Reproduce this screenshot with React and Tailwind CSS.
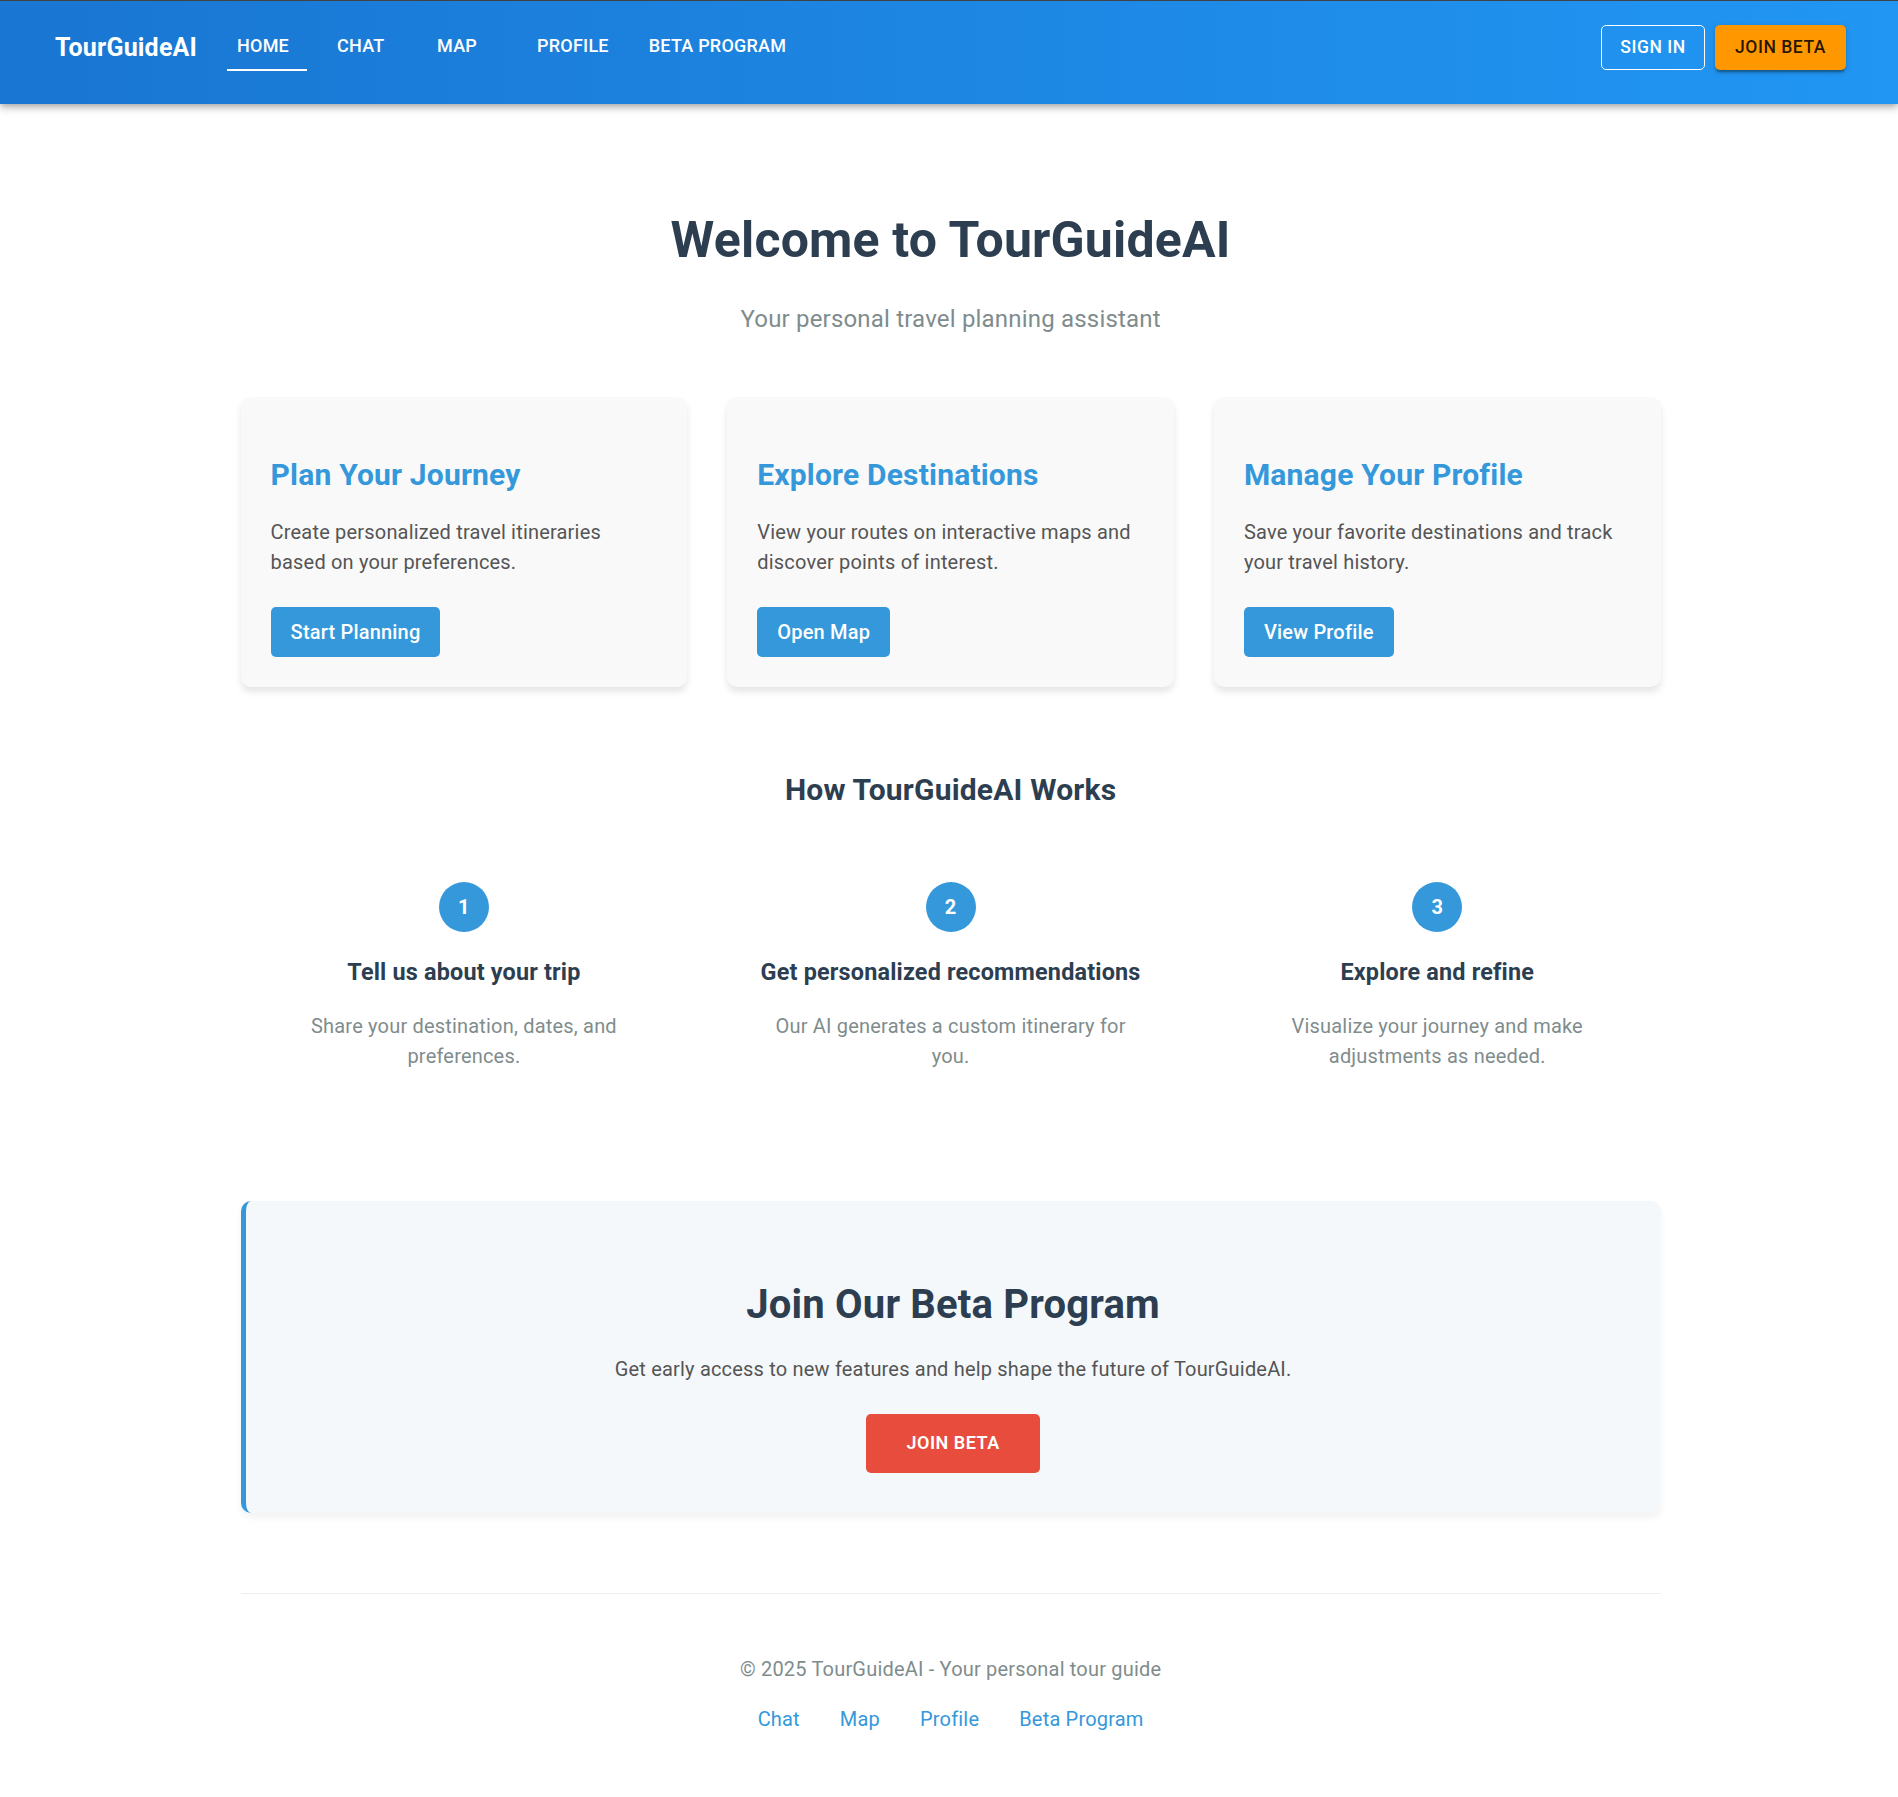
const NAV = ['Home', 'Chat', 'Map', 'Profile', 'Beta Program'];

const FEATURES = [
  {
    title: 'Plan Your Journey',
    text: 'Create personalized travel itineraries based on your preferences.',
    action: 'Start Planning',
  },
  {
    title: 'Explore Destinations',
    text: 'View your routes on interactive maps and discover points of interest.',
    action: 'Open Map',
  },
  {
    title: 'Manage Your Profile',
    text: 'Save your favorite destinations and track your travel history.',
    action: 'View Profile',
  },
];

const STEPS = [
  { title: 'Tell us about your trip', text: 'Share your destination, dates, and preferences.' },
  { title: 'Get personalized recommendations', text: 'Our AI generates a custom itinerary for you.' },
  { title: 'Explore and refine', text: 'Visualize your journey and make adjustments as needed.' },
];

const LINKS = ['Chat', 'Map', 'Profile', 'Beta Program'];

function Header() {
  return (
    <header className="flex h-[104px] items-start border-t border-[#424242] bg-[linear-gradient(90deg,#1976d2_0%,#2196f3_100%)] pr-[52px] pl-[55px] text-white shadow-[0_2.5px_5px_-1.25px_rgba(0,0,0,0.2),0_5px_6.25px_0_rgba(0,0,0,0.14),0_1.25px_12.5px_0_rgba(0,0,0,0.12)]">
      <div className="mt-[27px] w-[172px] text-[25px] leading-10 font-bold tracking-[0.1876px]">TourGuideAI</div>
      <nav className="mt-[20px] flex grow gap-5">
        {NAV.map((item, i) => (
          <a
            key={item}
            className={
              'h-[50px] min-w-20 border-b-2 px-2.5 text-lg leading-[50px] font-medium tracking-[0.23px] uppercase ' +
              (i === 0 ? 'border-white' : 'border-transparent')
            }
          >
            {item}
          </a>
        ))}
      </nav>
      <div className="mt-6 flex gap-2.5">
        <button className="h-[45px] w-[104px] rounded-[5px] border border-white pb-0.5 text-[17.5px] font-medium tracking-[0.53px]">
          SIGN IN
        </button>
        <button className="h-[45px] w-[131px] rounded-[5px] bg-[#ff9800] pb-0.5 text-[17.5px] font-medium tracking-[0.53px] text-black/87 shadow-[0_3.75px_1.25px_-2.5px_rgba(0,0,0,0.2),0_2.5px_2.5px_0_rgba(0,0,0,0.14),0_1.25px_6.25px_0_rgba(0,0,0,0.12)]">
          JOIN BETA
        </button>
      </div>
    </header>
  );
}

export default function App() {
  return (
    <div className="min-h-[1797px] bg-white font-[Roboto,sans-serif] text-xl leading-[30px] tracking-[0.1876px]">
      <Header />
      <main className="ml-[240.6px] w-[1420px]">
        <section className="pt-[99px] text-center">
          <h1 className="text-[50px] leading-[75px] font-bold text-[#2c3e50]">Welcome to TourGuideAI</h1>
          <p className="mt-[23px] text-2xl leading-9 text-[#7f8c8d]">Your personal travel planning assistant</p>
        </section>

        <section className="mt-[60px] grid grid-cols-3 gap-10">
          {FEATURES.map((f) => (
            <article
              key={f.title}
              className="h-[290px] rounded-[10px] bg-[#f9f9f9] px-[30px] pt-[55px] shadow-[0_5px_7.5px_rgba(0,0,0,0.1)]"
            >
              <h2 className="text-3xl leading-[45px] font-bold text-[#3498db]">{f.title}</h2>
              <p className="mt-5 text-[#555]">{f.text}</p>
              <button className="mt-[30px] h-[50px] rounded-[5px] bg-[#3498db] px-5 font-medium tracking-[0.1876px] text-white">
                {f.action}
              </button>
            </article>
          ))}
        </section>

        <section className="mt-20 text-center">
          <h2 className="text-3xl leading-[45px] font-bold text-[#2c3e50]">How TourGuideAI Works</h2>
          <div className="mt-[70px] grid grid-cols-3 gap-10">
            {STEPS.map((s, i) => (
              <div key={s.title} className="flex flex-col items-center">
                <div className="flex size-[50px] items-center justify-center rounded-full bg-[#3498db] font-bold text-white">
                  {i + 1}
                </div>
                <h3 className="mt-[23px] text-[23.4px] leading-[35px] font-bold whitespace-nowrap text-[#2c3e50]">
                  {s.title}
                </h3>
                <p className="mt-[21px] px-10 text-[#7f8c8d]">{s.text}</p>
              </div>
            ))}
          </div>
        </section>

        <section className="mt-[130px] flex h-[312px] flex-col items-center rounded-[10px] border-l-[5px] border-[#3498db] bg-[#f4f8fb] pt-[74px] shadow-[0_5px_7.5px_rgba(0,0,0,0.05)]">
          <h2 className="text-[40px] leading-[60px] font-bold text-[#2c3e50]">Join Our Beta Program</h2>
          <p className="mt-[19px] text-[#555]">
            Get early access to new features and help shape the future of TourGuideAI.
          </p>
          <button className="mt-[30px] h-[59px] w-[174px] rounded-[5px] bg-[#e74c3c] pb-0.5 text-lg font-semibold tracking-[0.5px] text-white">
            JOIN BETA
          </button>
        </section>

        <footer className="mt-20 border-t border-[#eee] pt-[60px] text-center">
          <p className="text-[#7f8c8d]">© 2025 TourGuideAI - Your personal tour guide</p>
          <div className="mt-5 flex justify-center gap-10 text-[#3498db]">
            {LINKS.map((l) => (
              <a key={l}>{l}</a>
            ))}
          </div>
        </footer>
      </main>
    </div>
  );
}
